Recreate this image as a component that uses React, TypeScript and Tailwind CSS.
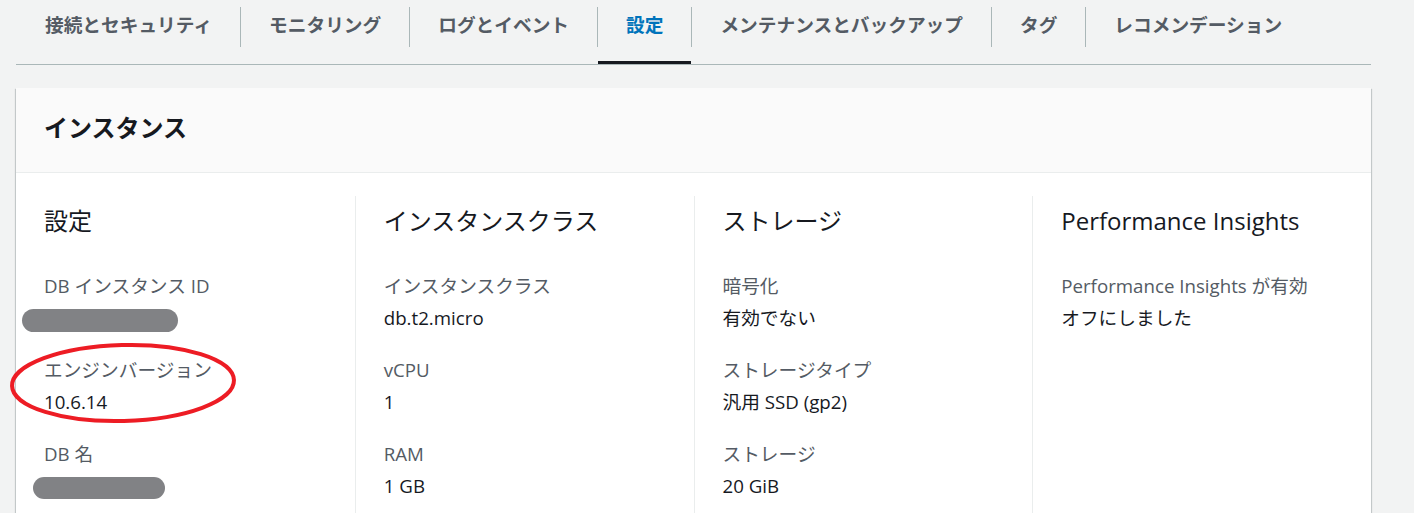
import React from "react";

const tabs = [
  "接続とセキュリティ",
  "モニタリング",
  "ログとイベント",
  "設定",
  "メンテナンスとバックアップ",
  "タグ",
  "レコメンデーション",
];

type Row = { label: string; value?: string; redact?: "a" | "b" };

const columns: { title: string; rows: Row[] }[] = [
  {
    title: "設定",
    rows: [
      { label: "DB インスタンス ID", redact: "a" },
      { label: "エンジンバージョン", value: "10.6.14" },
      { label: "DB 名", redact: "b" },
    ],
  },
  {
    title: "インスタンスクラス",
    rows: [
      { label: "インスタンスクラス", value: "db.t2.micro" },
      { label: "vCPU", value: "1" },
      { label: "RAM", value: "1 GB" },
    ],
  },
  {
    title: "ストレージ",
    rows: [
      { label: "暗号化", value: "有効でない" },
      { label: "ストレージタイプ", value: "汎用 SSD (gp2)" },
      { label: "ストレージ", value: "20 GiB" },
    ],
  },
  {
    title: "Performance Insights",
    rows: [{ label: "Performance Insights が有効", value: "オフにしました" }],
  },
];

export default function App() {
  return (
    <div
      className="relative h-[513px] overflow-hidden bg-[#f2f3f3] pl-4 pr-[43px]"
      style={{ fontFamily: '"Open Sans", "Noto Sans CJK JP", sans-serif' }}
    >
      {/* Tabs */}
      <div className="flex h-[65px] items-start border-b border-[#aab7b8] pt-[7px]">
        {tabs.map((t, i) => {
          const active = t === "設定";
          return (
            <div key={t} className="relative h-[57px]">
              <div
                className={
                  "flex h-[40px] items-center px-7 pb-1 text-[18.7px] font-bold whitespace-nowrap " +
                  (i > 0 ? "border-l border-[#aab7b8] " : "pl-[29px] ") +
                  (active ? "text-[#0073bb]" : "text-[#545b64]")
                }
              >
                {t}
              </div>
              {active && (
                <div className="absolute bottom-0 left-[1px] right-0 h-[3px] bg-[#16191f]" />
              )}
            </div>
          );
        })}
      </div>

      {/* Card */}
      <div className="mt-[23px] bg-white shadow-[0_1px_1px_0_rgba(0,28,36,0.3),1px_1px_1px_0_rgba(0,28,36,0.15),-1px_1px_1px_0_rgba(0,28,36,0.15)]">
        <div className="flex h-[85px] items-center border-b border-[#eaeded] bg-[#fafafa] px-7 pb-1">
          <h2 className="text-[24px] font-bold text-[#16191f]">インスタンス</h2>
        </div>
        <div className="grid grid-cols-4 pt-[23px]">
          {columns.map((c, ci) => (
            <div
              key={c.title}
              className={"pl-7 pr-5 pb-12 " + (ci > 0 ? "border-l border-[#eaeded]" : "")}
            >
              <div className="text-[24px] leading-[50px] text-[#16191f] whitespace-nowrap">
                {c.title}
              </div>
              <div className="mt-[24px] flex flex-col gap-[20px]">
                {c.rows.map((r) => (
                  <div key={r.label}>
                    <div className="text-[18.7px] leading-[32px] text-[#545b64] whitespace-nowrap">
                      {r.label}
                    </div>
                    {r.redact === "a" ? (
                      <div className="h-[32px] pt-[7px]">
                        <div className="-ml-[22px] h-[23px] w-[156px] rounded-full bg-[#818285]" />
                      </div>
                    ) : r.redact === "b" ? (
                      <div className="h-[32px] pt-[7px]">
                        <div className="-ml-[11px] h-[22px] w-[132px] rounded-full bg-[#818285]" />
                      </div>
                    ) : (
                      <div className="text-[18.7px] leading-[32px] text-[#16191f] whitespace-nowrap">
                        {r.value}
                      </div>
                    )}
                  </div>
                ))}
              </div>
            </div>
          ))}
        </div>
      </div>

      {/* Red annotation ellipse */}
      <svg
        className="pointer-events-none absolute left-[8px] top-[341px]"
        width="230"
        height="84"
        viewBox="0 0 230 84"
      >
        <ellipse
          cx="115"
          cy="42"
          rx="111"
          ry="38"
          fill="none"
          stroke="#ed1c24"
          strokeWidth="4"
          transform="rotate(-1.5 115 42)"
        />
      </svg>
    </div>
  );
}
